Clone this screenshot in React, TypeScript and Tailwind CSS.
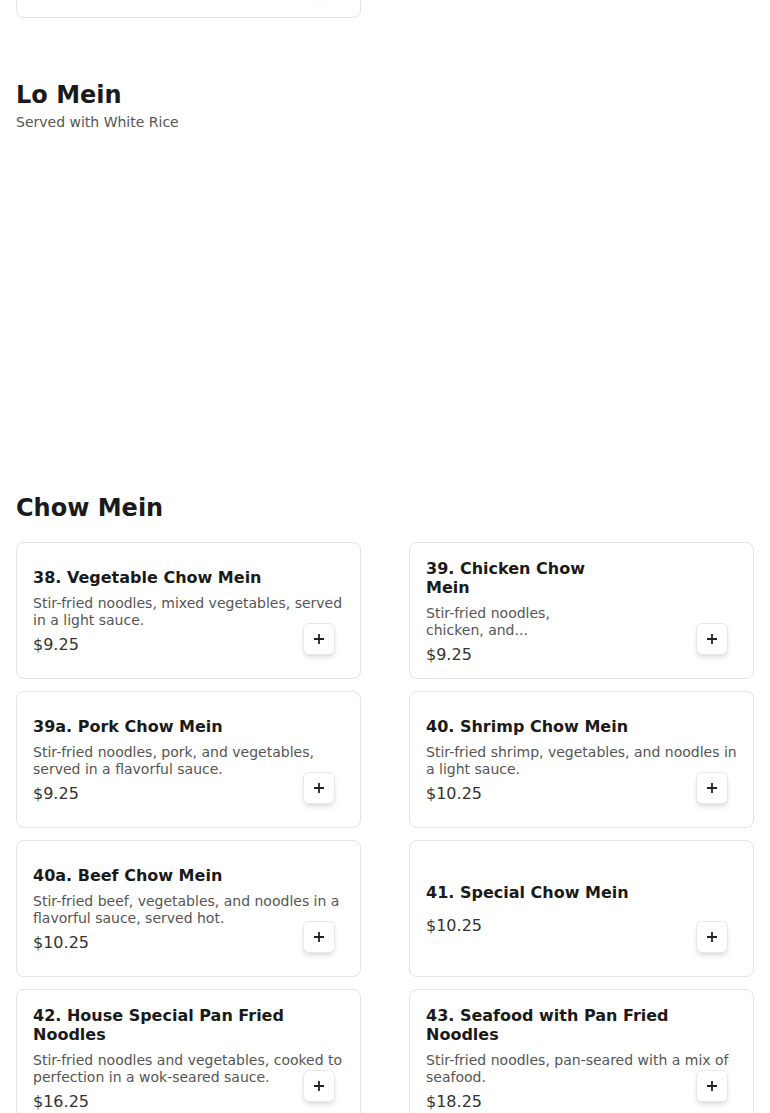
import React from "react";

type Dish = {
  name: string;
  desc?: string;
  price: string;
  narrow?: boolean;
};

const chowMein: Dish[] = [
  {
    name: "38. Vegetable Chow Mein",
    desc: "Stir-fried noodles, mixed vegetables, served in a light sauce.",
    price: "$9.25",
  },
  {
    name: "39. Chicken Chow Mein",
    desc: "Stir-fried noodles, chicken, and...",
    price: "$9.25",
    narrow: true,
  },
  {
    name: "39a. Pork Chow Mein",
    desc: "Stir-fried noodles, pork, and vegetables, served in a flavorful sauce.",
    price: "$9.25",
  },
  {
    name: "40. Shrimp Chow Mein",
    desc: "Stir-fried shrimp, vegetables, and noodles in a light sauce.",
    price: "$10.25",
  },
  {
    name: "40a. Beef Chow Mein",
    desc: "Stir-fried beef, vegetables, and noodles in a flavorful sauce, served hot.",
    price: "$10.25",
  },
  {
    name: "41. Special Chow Mein",
    price: "$10.25",
  },
  {
    name: "42. House Special Pan Fried Noodles",
    desc: "Stir-fried noodles and vegetables, cooked to perfection in a wok-seared sauce.",
    price: "$16.25",
  },
  {
    name: "43. Seafood with Pan Fried Noodles",
    desc: "Stir-fried noodles, pan-seared with a mix of seafood.",
    price: "$18.25",
  },
];

const AddButton = () => (
  <button className="absolute bottom-[23px] right-[25px] flex h-8 w-8 items-center justify-center rounded-md border border-[#e8e8e8] bg-white text-[#222] shadow-md">
    <svg width="10" height="10" viewBox="0 0 10 10" fill="none" stroke="currentColor" strokeWidth="1.8">
      <path d="M5 0v10M0 5h10" />
    </svg>
  </button>
);

const DishCard = ({ dish }: { dish: Dish }) => (
  <div className="relative flex h-[137px] items-center rounded-lg border border-[#e3e3e3] bg-white px-4 pt-[4px]">
    <div className={dish.narrow ? "w-[171px]" : "w-full"}>
      <h3 className="text-base font-bold leading-[19px] text-[#1a1a1a]">{dish.name}</h3>
      <p className="mt-2 mb-1 line-clamp-2 text-sm leading-[17px] text-[#555]">{dish.desc}</p>
      <p className="text-base leading-6 text-[#333]">{dish.price}</p>
    </div>
    <AddButton />
  </div>
);

export default function App() {
  return (
    <div className="min-h-screen overflow-hidden bg-white px-4 font-['DejaVu_Sans',sans-serif]">
      {/* tail of the previous section */}
      <div className="-mt-[119px] grid grid-cols-2 gap-x-12">
        <div className="relative h-[137px] rounded-lg border border-[#e3e3e3] bg-white">
          <AddButton />
        </div>
      </div>

      <section className="mt-[61px]">
        <h2 className="text-2xl font-bold leading-8 text-[#1a1a1a]">Lo Mein</h2>
        <p className="mt-px text-sm leading-5 text-[#555]">Served with White Rice</p>
        <div className="h-[300px]" />
      </section>

      <section className="mt-[60px]">
        <h2 className="mb-[18px] text-2xl font-bold leading-8 text-[#1a1a1a]">Chow Mein</h2>
        <div className="grid grid-cols-2 gap-x-12 gap-y-3">
          {chowMein.map((dish) => (
            <DishCard key={dish.name} dish={dish} />
          ))}
        </div>
      </section>
    </div>
  );
}
